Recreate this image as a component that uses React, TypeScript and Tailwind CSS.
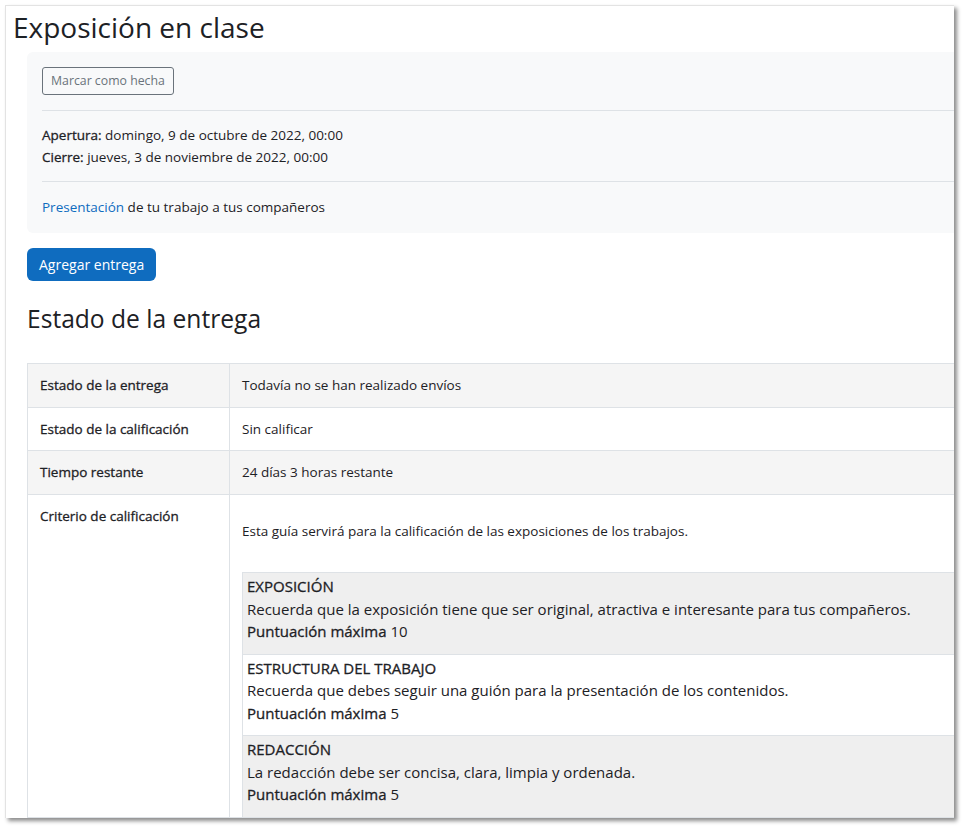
const criteria = [
  {
    title: 'EXPOSICIÓN',
    text: 'Recuerda que la exposición tiene que ser original, atractiva e interesante para tus compañeros.',
    max: 10,
  },
  {
    title: 'ESTRUCTURA DEL TRABAJO',
    text: 'Recuerda que debes seguir una guión para la presentación de los contenidos.',
    max: 5,
  },
  {
    title: 'REDACCIÓN',
    text: 'La redacción debe ser concisa, clara, limpia y ordenada.',
    max: 5,
  },
]

const status = [
  { label: 'Estado de la entrega', value: 'Todavía no se han realizado envíos' },
  { label: 'Estado de la calificación', value: 'Sin calificar' },
  { label: 'Tiempo restante', value: '24 días 3 horas restante' },
]

// faux bold: the original's bold text keeps regular widths
const heavy = 'font-normal [-webkit-text-stroke:0.3px_#1d2125]'

export default function App() {
  return (
    <div className="h-[827px] w-[963px] overflow-hidden bg-white" style={{ fontFamily: '"Open Sans", "Noto Sans", sans-serif' }}>
      <div className="ml-[5px] mt-[5px] h-[813px] w-[949px] overflow-hidden border-l border-t border-[#e3e3e3] bg-white text-[#1d2125] shadow-[3px_3px_4px_rgba(0,0,0,0.45)]">
        <h1 className="pl-[7px] pt-[3px] text-[28px] leading-[36px] font-normal">Exposición en clase</h1>

        <div className="ml-[21px] w-[1000px]">
          <div className="mt-[7px] rounded-md bg-[#f8f9fa] px-[15px] pb-[15px] pt-[15px] text-[13.5px]">
            <button className="rounded-[3px] border border-[#6a737b] bg-transparent px-[8px] py-[4px] text-[12.3px] leading-[18px] text-[#6a737b]">
              Marcar como hecha
            </button>
            <div className="mt-[15px] border-t border-[#dee2e6]" />
            <div className="py-[13px] leading-[22px]">
              <div>
                <strong className={heavy}>Apertura:</strong> domingo, 9 de octubre de 2022, 00:00
              </div>
              <div>
                <strong className={heavy}>Cierre:</strong> jueves, 3 de noviembre de 2022, 00:00
              </div>
            </div>
            <div className="border-t border-[#dee2e6]" />
            <p className="pt-[14px] leading-[22px]">
              <a className="text-[#0f6cbf]">Presentación</a> de tu trabajo a tus compañeros
            </p>
          </div>

          <button className="mt-[15px] rounded-md bg-[#0f6cbf] px-[12px] text-[14px] leading-[33px] text-white">
            Agregar entrega
          </button>

          <h2 className="mt-[21px] text-[24.6px] leading-[34px] font-normal">Estado de la entrega</h2>

          <table className="mt-[27px] w-full border-collapse text-[13.5px] leading-[20.5px]">
            <tbody>
              {status.map((row, i) => (
                <tr key={row.label} className={i % 2 === 0 ? 'bg-[#f5f5f5]' : 'bg-white'}>
                  <th className={`w-[202px] border border-[#dee2e6] px-[12px] py-[11px] text-left ${heavy}`}>
                    {row.label}
                  </th>
                  <td className="border border-[#dee2e6] px-[12px] py-[11px]">{row.value}</td>
                </tr>
              ))}
              <tr className="bg-white">
                <th className={`border border-[#dee2e6] px-[12px] py-[11px] text-left align-top ${heavy}`}>
                  Criterio de calificación
                </th>
                <td className="border border-[#dee2e6] px-[12px] pt-[26px] align-top">
                  <p>Esta guía servirá para la calificación de las exposiciones de los trabajos.</p>
                  <div className="mt-[31px] border-l border-[#dee2e6] text-[15px] leading-[22.5px]">
                    {criteria.map((c, i) => (
                      <div
                        key={c.title}
                        className={`border-t border-[#dee2e6] px-[4px] pb-[11px] pt-[2px] ${i % 2 === 0 ? 'bg-[#efefef]' : 'bg-white'}`}
                      >
                        <div className={heavy}>{c.title}</div>
                        <div>{c.text}</div>
                        <div>
                          <span className={heavy}>Puntuación máxima</span> {c.max}
                        </div>
                      </div>
                    ))}
                  </div>
                </td>
              </tr>
            </tbody>
          </table>
        </div>
      </div>
    </div>
  )
}
